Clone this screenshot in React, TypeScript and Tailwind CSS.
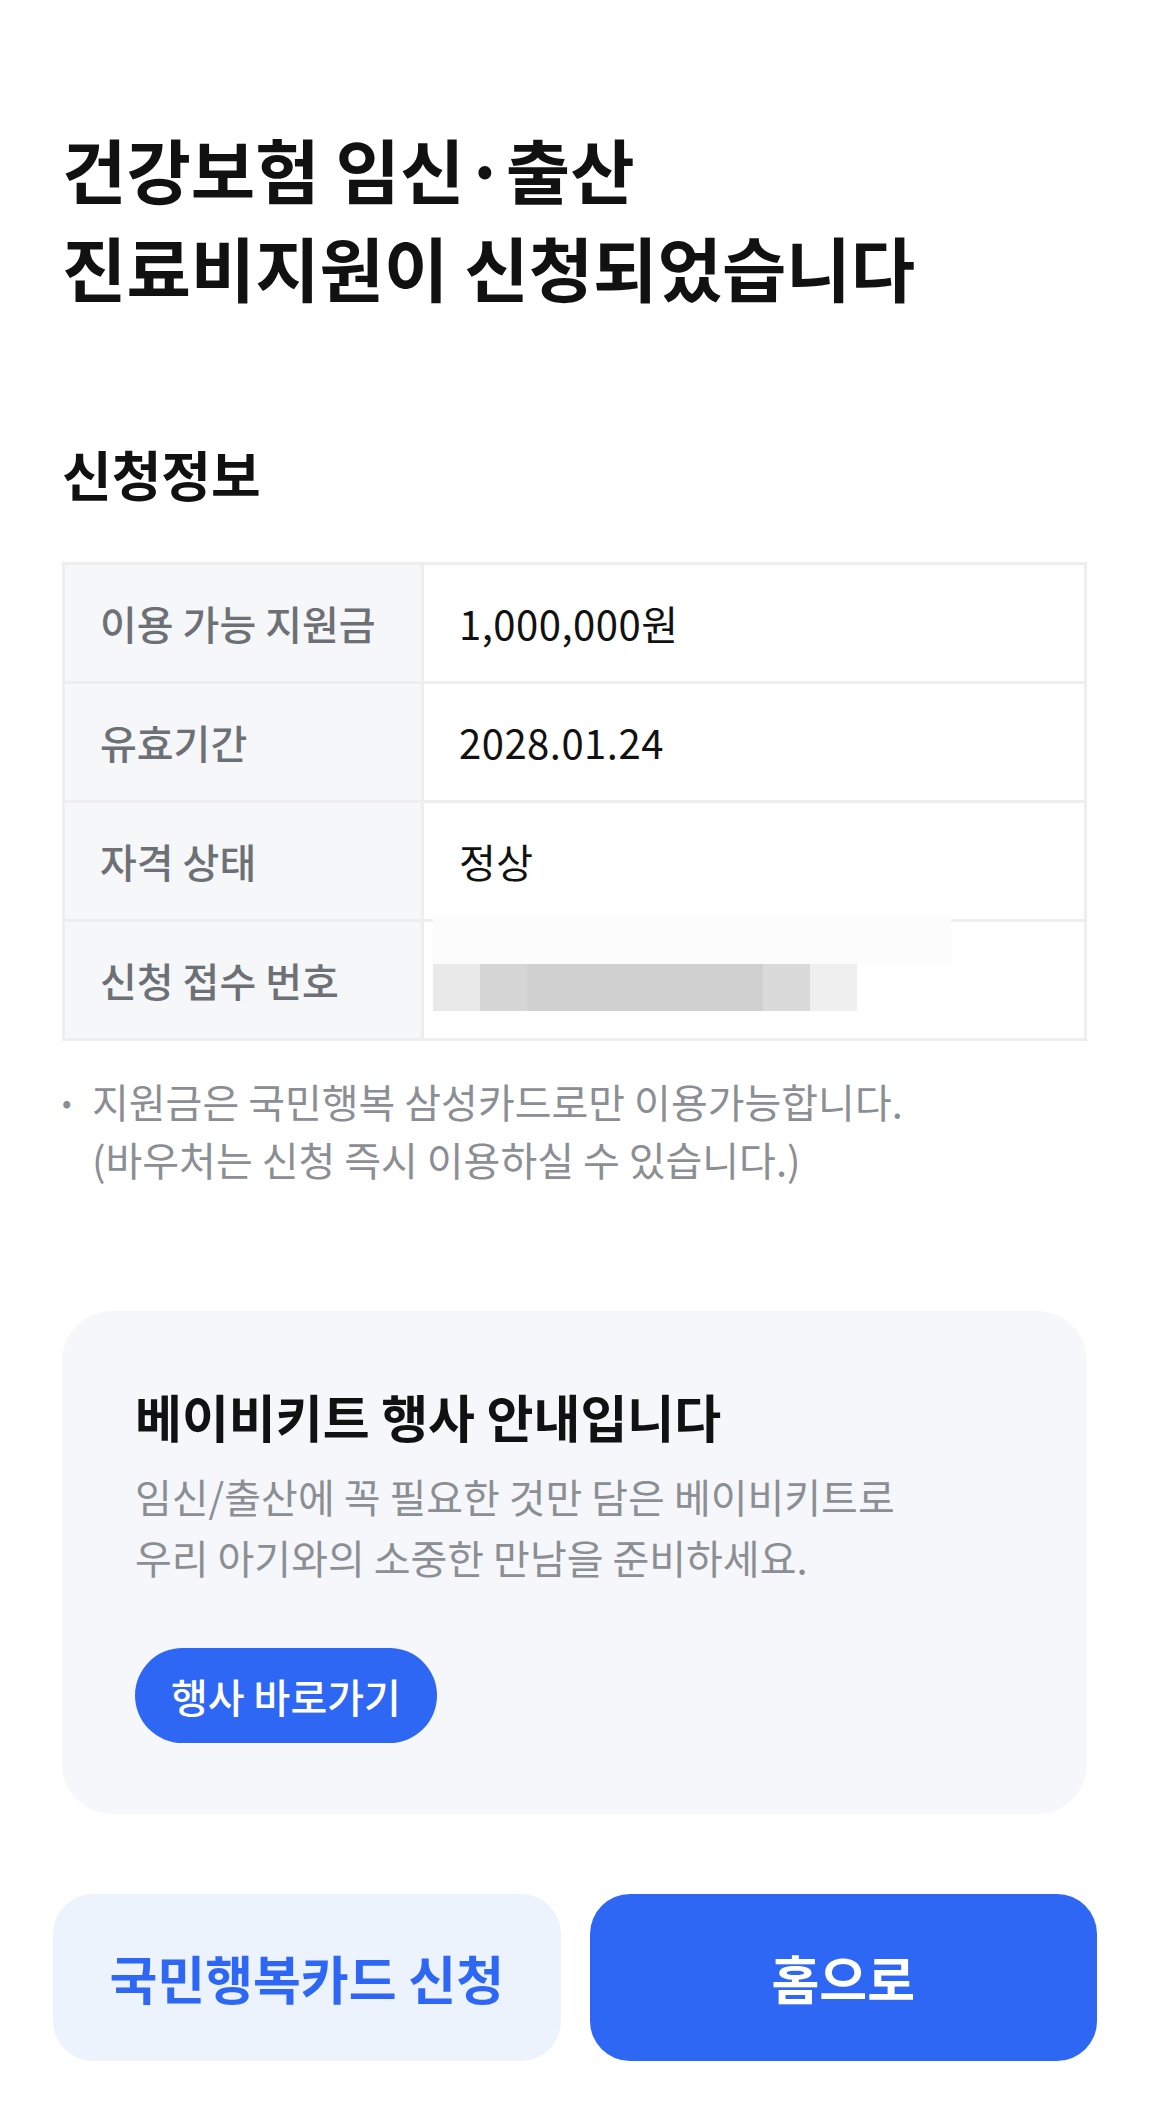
const rows = [
  { label: '이용 가능 지원금', value: '1,000,000원' },
  { label: '유효기간', value: '2028.01.24' },
  { label: '자격 상태', value: '정상' },
  { label: '신청 접수 번호', value: '' },
]

function BlurredNumber() {
  // 접수 번호는 가려진 상태로 표시
  return (
    <div className="absolute left-[9px] top-[-6px] h-[100px] w-[518px]">
      <div className="absolute inset-x-0 top-0 h-[48px] bg-[#fcfcfc]" />
      <div className="absolute left-0 top-[48px] flex h-[47px]">
        <div className="w-[47px] bg-[#e9e9e9]" />
        <div className="w-[47px] bg-[#d6d6d6]" />
        <div className="w-[236px] bg-[#d0d0d0]" />
        <div className="w-[47px] bg-[#dadada]" />
        <div className="w-[47px] bg-[#efefef]" />
      </div>
    </div>
  )
}

export default function App() {
  return (
    <div
      className="min-h-[2118px] w-full bg-white text-[#111111]"
      style={{ fontFamily: '"Noto Sans CJK KR", "Noto Sans", sans-serif' }}
    >
      <div className="pl-[62px] pr-[73px] pt-[120px]">
        <h1 className="text-[70px] font-bold leading-[98px]">
          건강보험 임신·출산
          <br />
          진료비지원이 신청되었습니다
        </h1>

        <h2 className="mt-[126px] text-[54px] font-bold leading-[64px]">신청정보</h2>

        <div className="mt-[56px] grid grid-cols-[356px_1fr] gap-[3px] bg-[#eeeeee] p-[3px]">
          {rows.map((row, i) => (
            <div key={row.label} className="contents">
              <div className="flex h-[116px] items-center bg-[#f5f7f9] pl-[35px] text-[40px] font-medium text-[#6d7075]">
                {row.label}
              </div>
              <div className="relative flex h-[116px] items-center bg-white pl-[35px] text-[40px] tracking-[0.5px]">
                {i === 3 ? <BlurredNumber /> : <span>{row.value}</span>}
              </div>
            </div>
          ))}
        </div>

        <div className="mt-[31px] flex text-[40px] leading-[58px] text-[#8b8f94]">
          <span className="w-[30px] shrink-0 text-[28px]">•</span>
          <p>
            지원금은 국민행복 삼성카드로만 이용가능합니다.
            <br />
            (바우처는 신청 즉시 이용하실 수 있습니다.)
          </p>
        </div>

        <div className="mt-[123px] rounded-[50px] bg-[#f5f7fa] px-[73px] pb-[71px] pt-[75px]">
          <h3 className="text-[51px] font-bold leading-[60px]">베이비키트 행사 안내입니다</h3>
          <p className="mt-[20px] text-[40px] leading-[61px] text-[#8b8f94]">
            임신/출산에 꼭 필요한 것만 담은 베이비키트로
            <br />
            우리 아기와의 소중한 만남을 준비하세요.
          </p>
          <button className="mt-[60px] h-[95px] rounded-full bg-[#2f67f5] px-[36px] text-[40px] font-medium text-white">
            행사 바로가기
          </button>
        </div>
      </div>

      <div className="mt-[80px] grid grid-cols-2 gap-[29px] pb-[55px] pl-[53px] pr-[63px]">
        <button className="h-[167px] rounded-[40px] bg-[#edf3fd] text-[52px] font-bold text-[#2f67f5]">
          국민행복카드 신청
        </button>
        <button className="h-[167px] rounded-[40px] bg-[#2f67f5] text-[52px] font-bold text-white">
          홈으로
        </button>
      </div>
    </div>
  )
}
